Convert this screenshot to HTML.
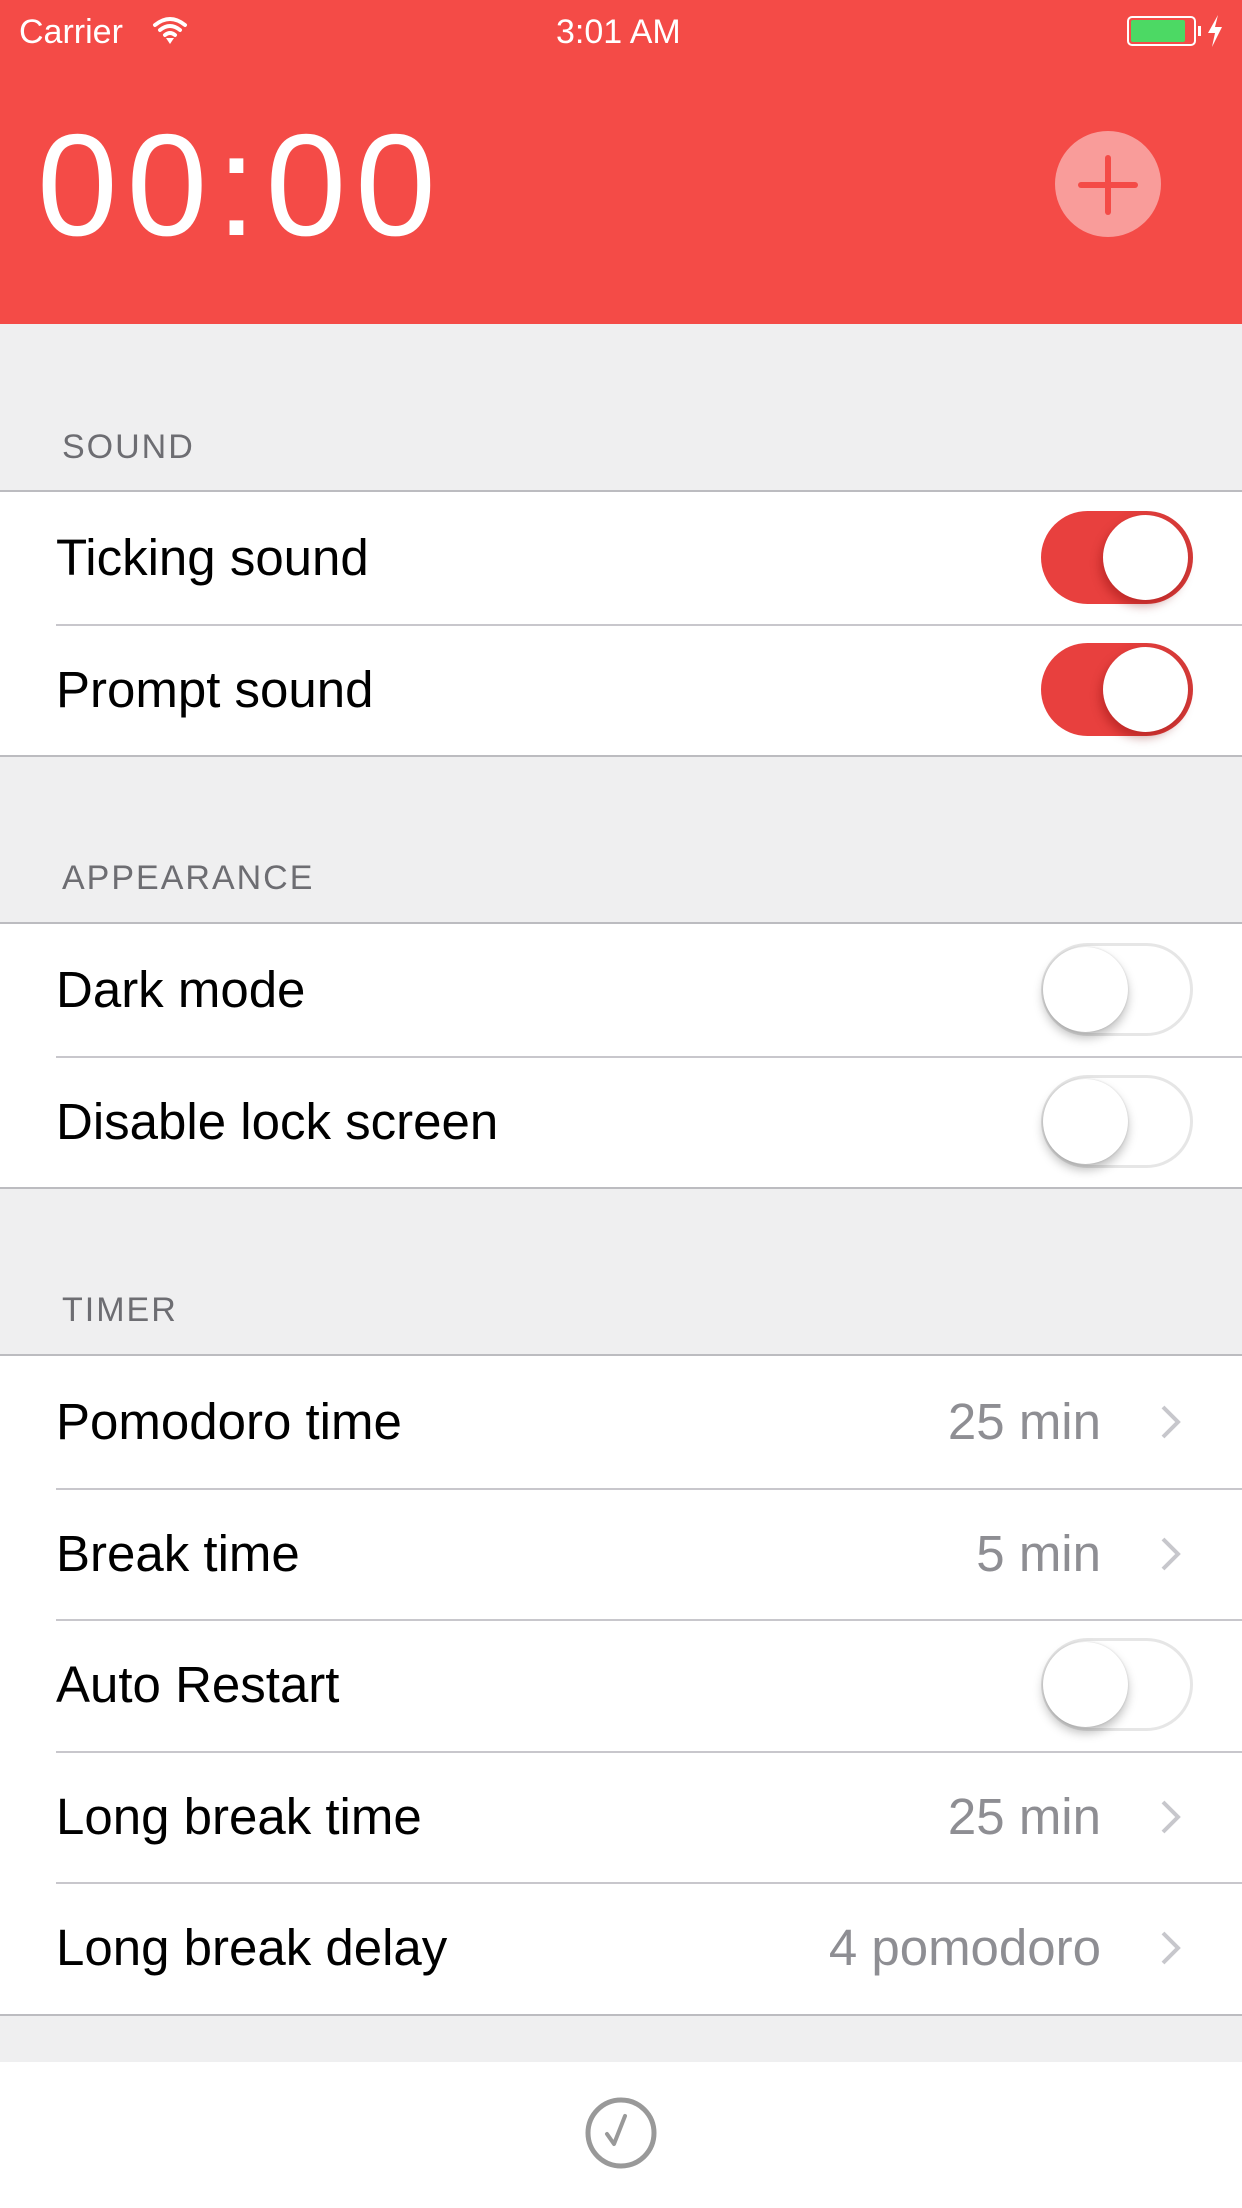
<!DOCTYPE html>
<html><head><meta charset="utf-8"><style>
*{margin:0;padding:0;box-sizing:border-box}
body{width:1242px;height:2208px;background:#efeff0;font-family:"Liberation Sans",sans-serif;position:relative;overflow:hidden}
.hdr{position:absolute;left:0;top:0;width:1242px;height:324px;background:#f44b47;color:#fff}
.abs{position:absolute}
.sec{position:absolute;left:62px;font-size:34px;color:#6d6d72;letter-spacing:2px}
.grp{position:absolute;left:0;width:1242px;background:#fff;border-top:2px solid #bcbcc0;border-bottom:2px solid #bcbcc0}
.row{position:relative;height:131.5px}
.row+.row:before{content:"";position:absolute;left:56px;right:0;top:0;border-top:2px solid #c8c7cc}
.lbl{position:absolute;left:56px;top:0;line-height:131px;font-size:51px;color:#000}
.val{position:absolute;right:141px;top:0;line-height:131px;font-size:51px;color:#8e8e93}
.chev{position:absolute;right:60px;top:48px}
.sw{position:absolute;left:1041px;top:19px;width:152px;height:93px;border-radius:47px}
.on{background:linear-gradient(90deg,#e8403e,#e8403e 50%,#d43a38)}
.on .k{left:62px;box-shadow:-3px 6px 10px rgba(120,0,0,.35)}
.off{background:#fff;border:3px solid #e6e6e6}
.k{position:absolute;top:4px;width:85px;height:85px;border-radius:50%;background:#fff}
.off .k{left:-1px;top:1px;box-shadow:0 6px 10px rgba(0,0,0,.25),0 0 2px rgba(0,0,0,.15)}
</style></head><body>
<div class="hdr">
  <div class="abs" style="left:19px;top:13px;font-size:34px">Carrier</div>
  <svg class="abs" style="left:152px;top:15px" width="36" height="30" viewBox="0 0 36 30"><path d="M3 10Q18-2 33 10M8 15Q18 7 28 15M13 20Q18 16 23 20" stroke="#fff" stroke-width="4" fill="none" stroke-linecap="round"/><path d="M14 23L18 29L22 23Z" fill="#fff"/></svg>
  <div class="abs" style="left:556px;top:13px;font-size:34px">3:01 AM</div>
  <div class="abs" style="left:1127px;top:16px;width:69px;height:30px;border:2px solid #fff;border-radius:5px;padding:2px"><div style="width:54px;height:22px;background:#4cd964;border-radius:2px"></div></div>
  <div class="abs" style="left:1198px;top:26px;width:3px;height:10px;background:#fff"></div>
  <svg class="abs" style="left:1207px;top:15px" width="16" height="32" viewBox="0 0 16 32"><path d="M11 0L1 18H8L5 32L15 12H8Z" fill="#fff"/></svg>
  <div class="abs" style="left:37px;top:113px;font-size:145px;line-height:145px;letter-spacing:9px">00:00</div>
  <div class="abs" style="left:1055px;top:131px;width:106px;height:106px;border-radius:50%;background:rgba(255,255,255,.45)"></div>
  <div class="abs" style="left:1078px;top:182px;width:60px;height:6px;border-radius:3px;background:#f44b47"></div>
  <div class="abs" style="left:1105px;top:155px;width:6px;height:60px;border-radius:3px;background:#f44b47"></div>
</div>

<div class="sec" style="top:428px">SOUND</div>
<div class="grp" style="top:490px">
  <div class="row"><div class="lbl">Ticking sound</div><div class="sw on"><div class="k"></div></div></div>
  <div class="row"><div class="lbl">Prompt sound</div><div class="sw on"><div class="k"></div></div></div>
</div>

<div class="sec" style="top:859px">APPEARANCE</div>
<div class="grp" style="top:922px">
  <div class="row"><div class="lbl">Dark mode</div><div class="sw off"><div class="k"></div></div></div>
  <div class="row"><div class="lbl">Disable lock screen</div><div class="sw off"><div class="k"></div></div></div>
</div>

<div class="sec" style="top:1291px">TIMER</div>
<div class="grp" style="top:1354px">
  <div class="row"><div class="lbl">Pomodoro time</div><div class="val">25 min</div><svg class="chev" width="22" height="36" viewBox="0 0 22 36"><path d="M3 3L18 18L3 33" stroke="#c7c7cc" stroke-width="4" fill="none"/></svg></div>
  <div class="row"><div class="lbl">Break time</div><div class="val">5 min</div><svg class="chev" width="22" height="36" viewBox="0 0 22 36"><path d="M3 3L18 18L3 33" stroke="#c7c7cc" stroke-width="4" fill="none"/></svg></div>
  <div class="row"><div class="lbl">Auto Restart</div><div class="sw off"><div class="k"></div></div></div>
  <div class="row"><div class="lbl">Long break time</div><div class="val">25 min</div><svg class="chev" width="22" height="36" viewBox="0 0 22 36"><path d="M3 3L18 18L3 33" stroke="#c7c7cc" stroke-width="4" fill="none"/></svg></div>
  <div class="row"><div class="lbl">Long break delay</div><div class="val">4 pomodoro</div><svg class="chev" width="22" height="36" viewBox="0 0 22 36"><path d="M3 3L18 18L3 33" stroke="#c7c7cc" stroke-width="4" fill="none"/></svg></div>
</div>

<div class="abs" style="left:0;top:2062px;width:1242px;height:146px;background:#fff"></div>
<svg class="abs" style="left:583px;top:2095px" width="76" height="76" viewBox="0 0 76 76"><circle cx="38" cy="38" r="33" stroke="#999" stroke-width="5" fill="none"/><path d="M24 39L31 49L42 21" stroke="#999" stroke-width="4" fill="none" stroke-linecap="round" stroke-linejoin="round"/></svg>
</body></html>
